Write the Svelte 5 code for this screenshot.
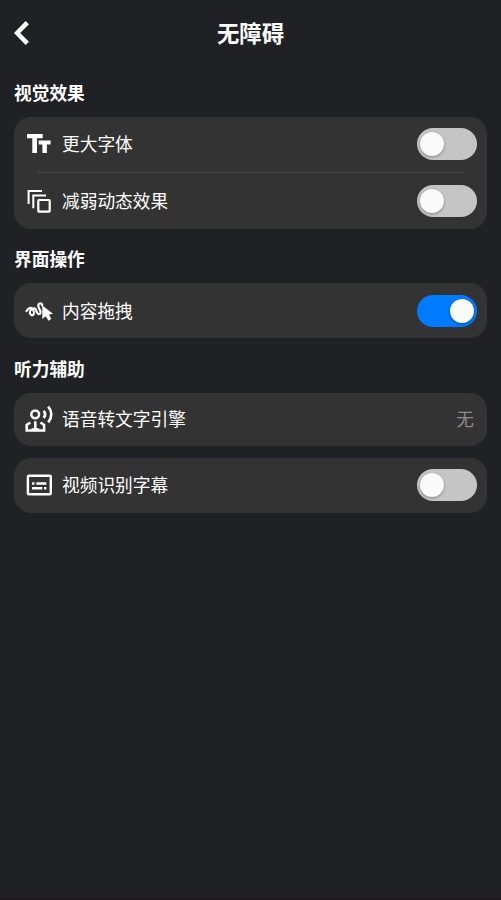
<script>
  let largeFont = false;
  let reduceMotion = false;
  let dragContent = true;
  let videoCaption = false;
</script>

<style>
  :global(body) {
    margin: 0;
    background-color: #202125;
  }

  main {
    box-sizing: border-box;
    height: 900px;
    padding: 0 14px;
    border-bottom: 2px solid #21191d;
    background-color: #202125;
    color: #ffffff;
    font-family: 'Noto Sans CJK SC', sans-serif;
    font-size: 17.7px;
    line-height: 24px;
  }

  header {
    display: grid;
    grid-template-columns: 32px 1fr 32px;
    align-items: center;
    height: 66px;
  }

  h1 {
    margin: 0;
    padding-bottom: 3px;
    text-align: center;
    font-size: 22.4px;
    line-height: 32px;
    font-weight: 700;
  }

  h2 {
    margin: 0;
    font-size: 17.7px;
    line-height: 24px;
    font-weight: 700;
  }

  section {
    padding-top: 14px;
  }

  section + section {
    padding-top: 17.5px;
  }

  button {
    padding: 0;
    border: none;
    background: none;
    color: inherit;
    font: inherit;
    cursor: pointer;
  }

  .back {
    width: 16px;
    height: 26px;
  }

  svg {
    display: block;
    flex: none;
  }

  .card {
    margin-top: 12px;
    border-radius: 17px;
    background-color: #333333;
  }

  h2 + .card {
    margin-top: 12.7px;
  }

  .row {
    display: flex;
    align-items: center;
    box-sizing: border-box;
    width: 100%;
    height: 55.5px;
    padding: 0 10.5px 0 9px;
    text-align: left;
  }

  .row.link {
    height: 53px;
  }

  .name {
    flex: 1;
    margin-left: 7px;
    padding-bottom: 2px;
  }

  .value {
    margin-right: 2.5px;
    padding-bottom: 2px;
    color: #8b8b8b;
  }

  .line {
    height: 1px;
    margin: 0 23px;
    background-color: #484848;
  }

  .switch {
    display: flex;
    flex: none;
    box-sizing: border-box;
    width: 59.5px;
    height: 32px;
    padding: 4px 3px;
    border-radius: 16px;
    background-color: #c5c5c5;
  }

  .switch.on {
    justify-content: flex-end;
    background-color: #007bff;
  }

  .knob {
    width: 24px;
    height: 24px;
    border-radius: 50%;
    background-color: #fafafa;
    box-shadow: 0 1px 3px rgba(0, 0, 0, 0.35);
  }
</style>

<main>
  <header>
    <button class="back" aria-label="返回">
      <svg width="16" height="26" viewBox="0 0 16 26" fill="none" stroke="#fff" stroke-width="4.6">
        <path d="M13.3 2.600 3.100 13l10.200 10.400" />
      </svg>
    </button>
    <h1>无障碍</h1>
  </header>

  <section>
    <h2>视觉效果</h2>
    <div class="card">
      <div class="row">
        <svg width="32" height="32" viewBox="0 0 32 32" fill="#fff">
          <path d="M4 6h15.700v4.200h-5.700V25H9.300V10.200H4zM15.700 12.600h11.900v3.900h-3.700V25h-4.500v-8.500h-3.700z" />
        </svg>
        <span class="name">更大字体</span>
        <button class="switch" class:on={largeFont} aria-label="更大字体" on:click={() => (largeFont = !largeFont)}>
          <span class="knob"></span>
        </button>
      </div>
      <div class="line"></div>
      <div class="row">
        <svg width="32" height="32" viewBox="0 0 32 32" fill="none" stroke="#fff" stroke-width="2">
          <path d="M5.600 19V6.100H19M10.300 23.300V10.500H23" />
          <rect x="15.300" y="15" width="11.400" height="11.600" rx="0.600" stroke-width="2.200" />
        </svg>
        <span class="name">减弱动态效果</span>
        <button class="switch" class:on={reduceMotion} aria-label="减弱动态效果" on:click={() => (reduceMotion = !reduceMotion)}>
          <span class="knob"></span>
        </button>
      </div>
    </div>
  </section>

  <section>
    <h2>界面操作</h2>
    <div class="card">
      <div class="row">
        <svg width="32" height="32" viewBox="0 0 32 32" fill="none">
          <path
            d="M3.500 16C5 13.600 7.600 12 9 13.500c1.700 1.800 2.600 4.700 1.300 6.200-1.300 1.300-3.700-.2-3.400-2.700.4-2.500 3.500-4.600 5.200-3.300 1.800 1.500 1.300 5.300 3.500 5.400 2.400 0 2.300-2.600 1-4.700-1.200-2.100-2-4.600-.3-5.700 1.500-1 3.200.100 2.900 1.900"
            stroke="#fff"
            stroke-width="2.200"
            stroke-linecap="round"
          />
          <path d="M19.300 10.400 30 18.800l-3.900.7 2.100 4.600-2.700 1.700-2.800-4.500-3.400 2.700z" fill="#fff" />
        </svg>
        <span class="name">内容拖拽</span>
        <button class="switch" class:on={dragContent} aria-label="内容拖拽" on:click={() => (dragContent = !dragContent)}>
          <span class="knob"></span>
        </button>
      </div>
    </div>
  </section>

  <section>
    <h2>听力辅助</h2>
    <div class="card">
      <button class="row link">
        <svg width="32" height="32" viewBox="0 0 32 32" fill="none" stroke="#fff" stroke-width="2.500">
          <circle cx="12.200" cy="11.300" r="3.900" />
          <path d="M7.300 19.500 3.700 22v5.600h17.400V22l-3.600-2.500M12.300 18.300v9M8.500 26.600h7.600" />
          <path d="M20.600 7.900c1.900 2.100 1.900 4.800 0 6.900M25.200 3.500c4 4.800 4 11 0 15.800" stroke-width="2.700" />
        </svg>
        <span class="name">语音转文字引擎</span>
        <span class="value">无</span>
      </button>
    </div>
    <div class="card">
      <div class="row">
        <svg width="32" height="32" viewBox="0 0 32 32" fill="none">
          <rect x="4.900" y="6.800" width="22.900" height="18.500" rx="1" stroke="#fff" stroke-width="2.400" />
          <path d="M9 13.300h2.500v2.500H9zM13.300 13.300h10v2.500h-10zM9 18h10.300v2.500H9zM21 18h2.400v2.500H21z" fill="#fff" />
        </svg>
        <span class="name">视频识别字幕</span>
        <button class="switch" class:on={videoCaption} aria-label="视频识别字幕" on:click={() => (videoCaption = !videoCaption)}>
          <span class="knob"></span>
        </button>
      </div>
    </div>
  </section>
</main>
